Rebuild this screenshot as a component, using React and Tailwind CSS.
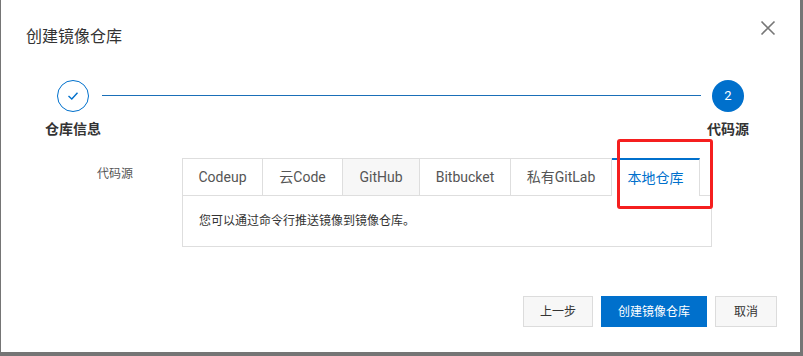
import React from "react";

const font = { fontFamily: 'Roboto, "Noto Sans CJK SC", sans-serif' };

export default function App() {
  const tabs = [
    { label: "Codeup", w: "w-[81px]", bg: "bg-white" },
    { label: "云Code", w: "w-[80px]", bg: "bg-white" },
    { label: "GitHub", w: "w-[77px]", bg: "bg-[#f7f7f7]" },
    { label: "Bitbucket", w: "w-[91px]", bg: "bg-white" },
    { label: "私有GitLab", w: "w-[101px]", bg: "bg-white" },
  ];
  return (
    <div className="w-[803px] h-[356px] bg-[#757575] overflow-hidden" style={font}>
      <div className="relative ml-[1px] w-[799px] h-[352px] bg-white flex flex-col">
        {/* close */}
        <button className="absolute left-[758px] top-[19px] w-[18px] h-[18px] flex items-center justify-center">
          <svg width="16" height="16" viewBox="0 0 16 16" fill="none" stroke="#777" strokeWidth="1.6">
            <path d="M1.5 1.5 L14.5 14.5 M14.5 1.5 L1.5 14.5" />
          </svg>
        </button>

        {/* title */}
        <div className="pt-[26px] pl-[25px] text-[16px] leading-[22px] text-[#333]">创建镜像仓库</div>

        {/* steps */}
        <div className="mt-[32px] ml-[44px] mr-[51px] flex">
          <div className="flex flex-col items-center w-[56px]">
            <div className="w-[32px] h-[32px] rounded-full border border-[#0070cc] flex items-center justify-center">
              <svg width="12" height="10" viewBox="0 0 12 10" fill="none" stroke="#0070cc" strokeWidth="1.4">
                <path d="M1.5 5 L4.8 8 L10.5 1.8" />
              </svg>
            </div>
            <div className="mt-[7px] text-[14px] leading-[20px] font-bold text-[#333] whitespace-nowrap">仓库信息</div>
          </div>
          <div className="flex-1 h-[1px] bg-[#1a6fb8] mt-[15px] ml-[1px] mr-[6px]" />
          <div className="flex flex-col items-center w-[42px]">
            <div className="w-[32px] h-[32px] rounded-full bg-[#0070cc] flex items-center justify-center text-white text-[13px]">2</div>
            <div className="mt-[7px] text-[14px] leading-[20px] font-bold text-[#333] whitespace-nowrap">代码源</div>
          </div>
        </div>

        {/* form row */}
        <div className="mt-[19px] flex">
          <div className="w-[181px] pl-[96px] pt-[8px] text-[12px] leading-[16px] text-[#555]">代码源</div>
          <div className="w-[530px] flex flex-col">
            <div className="flex h-[38px]">
              {tabs.map((t, i) => (
                <div
                  key={t.label}
                  className={`${t.w} ${t.bg} h-[38px] border-t border-r border-b border-[#dedede] ${i === 0 ? "border-l" : ""} flex items-center justify-center pt-[1px] text-[14px] text-[#555] whitespace-nowrap`}
                >
                  {t.label}
                </div>
              ))}
              <div className="w-[88px] h-[38px] border-t-2 border-t-[#0070cc] border-r border-r-[#dedede] bg-white flex items-center justify-center text-[14px] text-[#0070cc] whitespace-nowrap">
                本地仓库
              </div>
              <div className="flex-1 border-b border-[#dedede]" />
            </div>
            <div className="h-[51px] border-l border-r border-b border-[#dedede] px-[16px] flex items-center text-[12px] text-[#333]">
              您可以通过命令行推送镜像到镜像仓库。
            </div>
          </div>
        </div>

        {/* buttons */}
        <div className="mt-[49px] flex justify-end pr-[23px] gap-[8px]">
          <button className="w-[70px] h-[31px] bg-[#f7f7f7] border border-[#dcdcdc] text-[12px] text-[#333]">上一步</button>
          <button className="w-[106px] h-[31px] bg-[#0070cc] text-[12px] text-white">创建镜像仓库</button>
          <button className="w-[62px] h-[31px] bg-[#f7f7f7] border border-[#dcdcdc] text-[12px] text-[#333]">取消</button>
        </div>

        {/* red annotation */}
        <div className="absolute left-[616px] top-[139px] w-[96px] h-[70px] border-[3px] border-[#f51f1f] rounded-[3px] pointer-events-none" />
      </div>
    </div>
  );
}
